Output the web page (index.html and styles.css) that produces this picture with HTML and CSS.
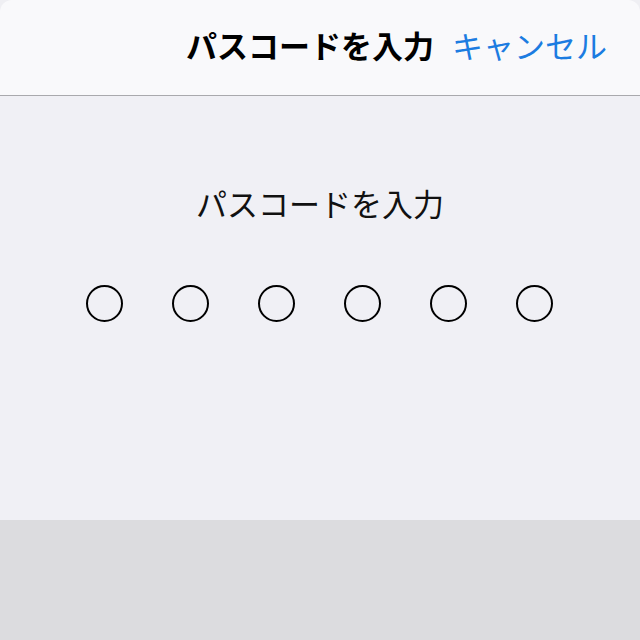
FILE: index.html
```html
<!DOCTYPE html>
<html lang="ja">
  <head>
    <meta charset="UTF-8" />
    <meta name="viewport" content="width=device-width, initial-scale=1.0" />
    <title>パスコードを入力</title>
    <link rel="stylesheet" href="styles.css">
  </head>
  <body>
    <div class="sheet">
      <header class="navbar">
        <h1 class="nav-title">パスコードを入力</h1>
        <button class="cancel" type="button">キャンセル</button>
      </header>

      <main class="passcode">
        <p class="prompt">パスコードを入力</p>
        <div class="dots">
          <span class="dot"></span>
          <span class="dot"></span>
          <span class="dot"></span>
          <span class="dot"></span>
          <span class="dot"></span>
          <span class="dot"></span>
        </div>
      </main>

      <div class="keypad"></div>
    </div>
  </body>
</html>
```

FILE: styles.css
```css
body {
  margin: 0;
  background-color: #efeff3;
  font-family: "Noto Sans CJK JP", "Noto Sans", sans-serif;
}
.sheet {
  width: 640px;
  height: 640px;
  display: flex;
  flex-direction: column;
  border-radius: 12px 12px 0 0;
  overflow: hidden;
}
.navbar {
  height: 89px;
  display: flex;
  align-items: center;
  justify-content: flex-end;
  gap: 18px;
  padding: 0 33px 6px 0;
  background-color: #f9f9fb;
  border-bottom: 1px solid #a9a9ad;
}
.nav-title {
  margin: 0;
  font-size: 31px;
  font-weight: 700;
  color: #000;
  line-height: 40px;
}
.cancel {
  padding: 0;
  background: none;
  border: none;
  font-family: inherit;
  font-size: 31px;
  line-height: 40px;
  color: #1c7ce1;
  cursor: pointer;
}
.passcode {
  height: 424px;
  display: flex;
  flex-direction: column;
  align-items: center;
  background-color: #f0f0f5;
}
.prompt {
  margin: 87px 0 0;
  font-size: 31px;
  line-height: 40px;
  color: #111;
}
.dots {
  display: flex;
  gap: 49px;
  margin-top: 62px;
  padding-right: 2px;
}
.dot {
  width: 33px;
  height: 33px;
  border: 2px solid #000;
  border-radius: 50%;
}
.keypad {
  flex: 1;
  background-color: #dcdcdf;
}
```
